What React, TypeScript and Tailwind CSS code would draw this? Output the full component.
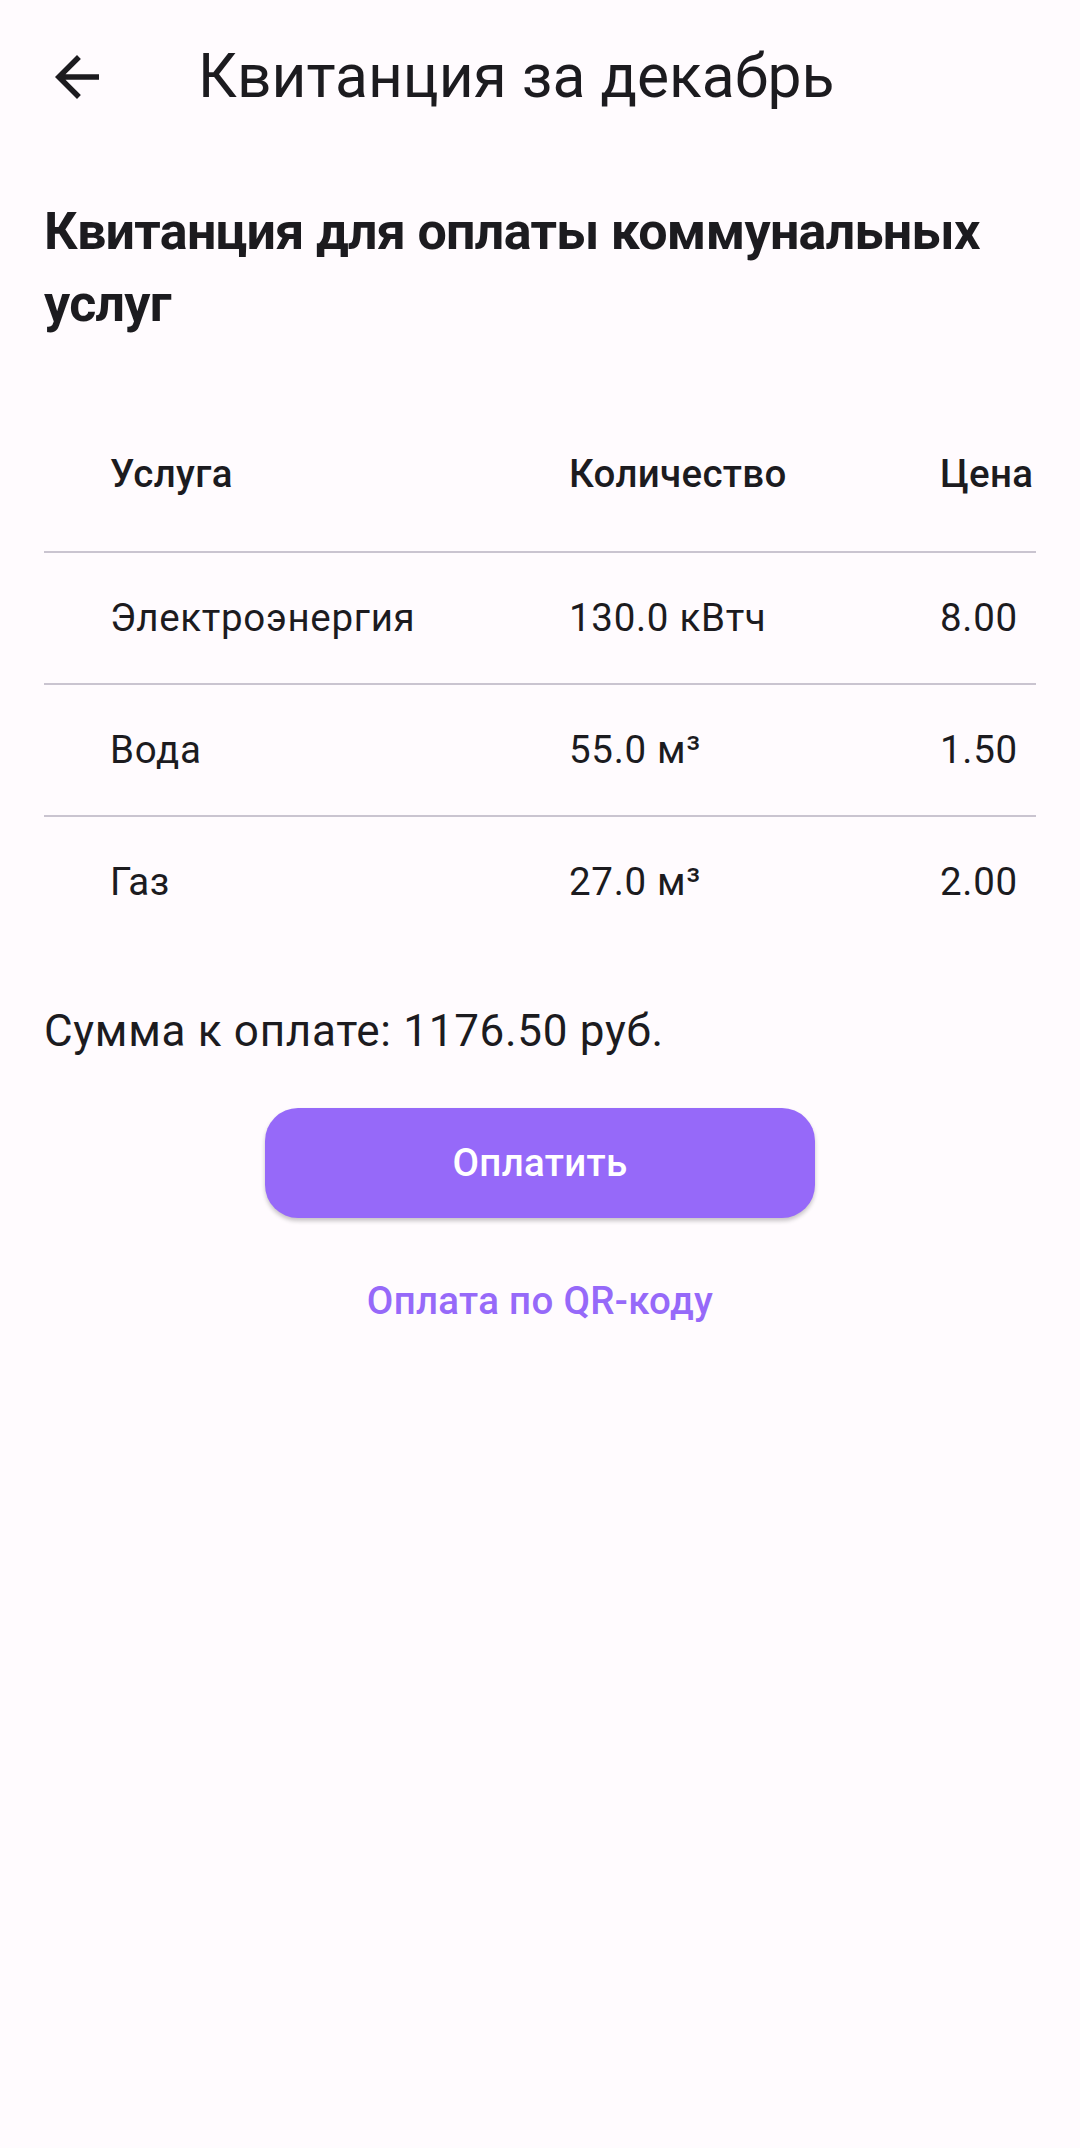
import React from "react";

type Row = { service: string; amount: string; price: string };

const rows: Row[] = [
  { service: "Электроэнергия", amount: "130.0 кВтч", price: "8.00" },
  { service: "Вода", amount: "55.0 м³", price: "1.50" },
  { service: "Газ", amount: "27.0 м³", price: "2.00" },
];

function BackIcon() {
  return (
    <svg viewBox="0 0 24 24" className="h-[66px] w-[66px]" fill="#1C1B1F">
      <path d="M20 11H7.83l5.59-5.59L12 4l-8 8 8 8 1.41-1.41L7.83 13H20v-2z" />
    </svg>
  );
}

export default function App() {
  return (
    <div className="min-h-[2148px] bg-[#FFFBFE] font-['Roboto','Noto_Sans',sans-serif] text-[#1C1B1F]">
      {/* App bar */}
      <header className="flex h-[154px] items-center">
        <button type="button" aria-label="Назад" className="ml-[44px] flex h-[66px] w-[66px] items-center justify-center">
          <BackIcon />
        </button>
        <h1 className="ml-[88px] text-[60.5px] leading-[72px] font-normal">Квитанция за декабрь</h1>
      </header>

      <main className="px-[44px]">
        <h2 className="mt-[42px] text-[52px] font-bold leading-[72px] tracking-[-0.7px]">
          Квитанция для оплаты коммунальных услуг
        </h2>

        {/* Table */}
        <div className="mt-[57px] overflow-hidden">
          <div className="grid h-[154px] grid-cols-[459px_371px_1fr] items-center pl-[66px] text-[38.5px] font-medium tracking-[0.3px]">
            <span>Услуга</span>
            <span>Количество</span>
            <span className="whitespace-nowrap">Цена</span>
          </div>
          {rows.map((r) => (
            <div
              key={r.service}
              className="grid h-[132px] grid-cols-[459px_371px_1fr] items-center border-t-[2px] border-[#CAC4D0] pl-[66px] text-[38.5px] tracking-[0.7px]"
            >
              <span>{r.service}</span>
              <span>{r.amount}</span>
              <span>{r.price}</span>
            </div>
          ))}
        </div>

        <p className="mt-[51px] text-[44px] leading-[66px] tracking-[0.7px]">Сумма к оплате: 1176.50 руб.</p>

        <div className="mt-[44px] flex justify-center">
          <button
            type="button"
            className="flex h-[110px] w-[550px] items-center justify-center rounded-[33px] bg-[#9669F9] text-[38.5px] font-medium tracking-[0.3px] text-white shadow-[0_3px_4px_rgba(0,0,0,0.22)]"
          >
            Оплатить
          </button>
        </div>

        <div className="mt-[55px] flex justify-center">
          <button type="button" className="text-[38.5px] font-medium leading-[55px] tracking-[0.3px] text-[#9669F9]">
            Оплата по QR-коду
          </button>
        </div>
      </main>
    </div>
  );
}
